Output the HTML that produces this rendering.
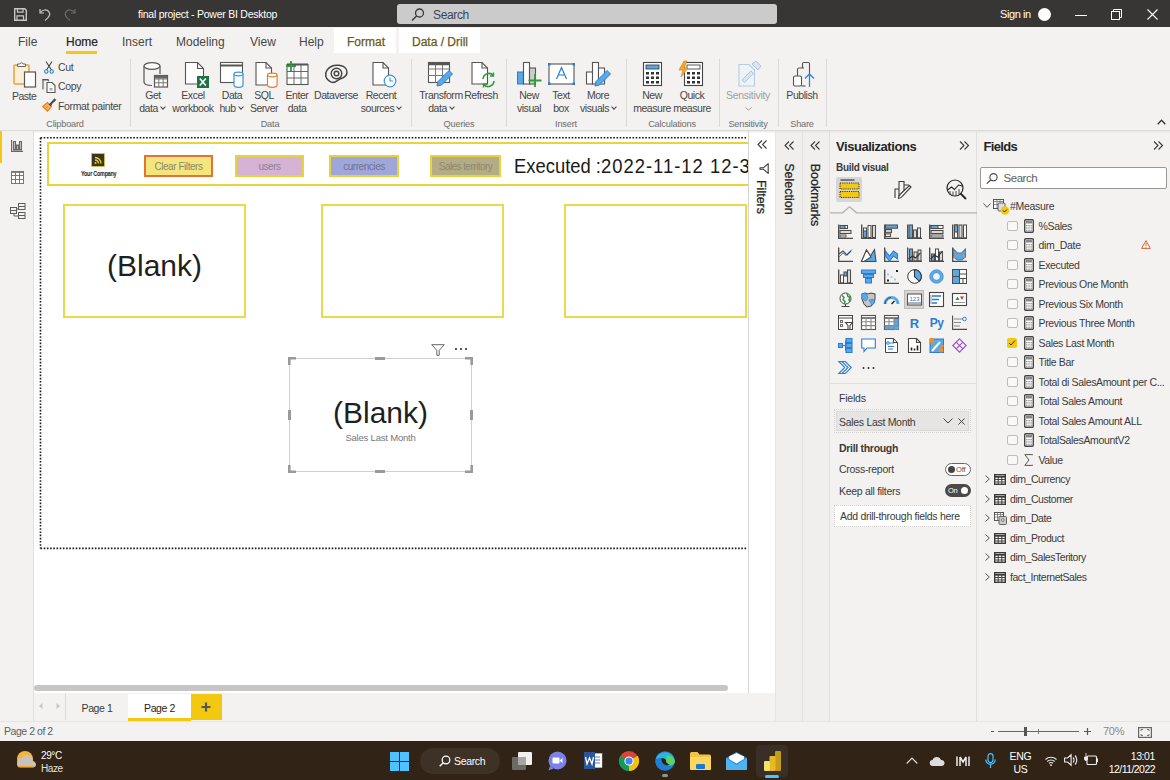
<!DOCTYPE html>
<html><head><meta charset="utf-8">
<style>
*{box-sizing:border-box;margin:0;padding:0}
html,body{width:1170px;height:780px;overflow:hidden;background:#f3f2f1;font-family:"Liberation Sans",sans-serif;color:#323130}
.a{position:absolute}
.t{position:absolute;white-space:nowrap;line-height:1}
.chev{display:inline-block;width:4px;height:4px;border-right:1.2px solid #444;border-bottom:1.2px solid #444;transform:rotate(45deg);margin:0 0 0 3px;position:relative;top:-3px}
svg{position:absolute;overflow:visible}
</style></head><body>
<!-- TITLE BAR -->
<div class="a" style="left:0;top:0;width:1170px;height:27px;background:#383634"></div>
<svg style="left:14px;top:8px" width="13" height="13" viewBox="0 0 13 13"><path d="M0.7 0.7h10l1.6 1.6v10H0.7z" fill="none" stroke="#c8c6c4" stroke-width="1.4"/><path d="M3.5 0.7v3.5h5.5V0.7M3 12.3V7.8h6.5v4.5" fill="none" stroke="#c8c6c4" stroke-width="1.2"/></svg>
<svg style="left:39px;top:8px" width="12" height="13" viewBox="0 0 12 13"><path d="M1 1v4h4" fill="none" stroke="#c8c6c4" stroke-width="1.2"/><path d="M1.3 4.8C3 1.5 8 1 10 3.8c1.8 2.6.5 5.2-4 8.7" fill="none" stroke="#c8c6c4" stroke-width="1.2"/></svg>
<svg style="left:64px;top:8px" width="12" height="13" viewBox="0 0 12 13"><path d="M11 1v4H7" fill="none" stroke="#6d6b69" stroke-width="1.2"/><path d="M10.7 4.8C9 1.5 4 1 2 3.8c-1.8 2.6-.5 5.2 4 8.7" fill="none" stroke="#6d6b69" stroke-width="1.2"/></svg>
<div class="a" style="left:397px;top:4px;width:380px;height:20px;background:#cbcbcb;border-radius:3px"></div>
<svg style="left:411px;top:8px" width="14" height="13" viewBox="0 0 14 13"><circle cx="8.5" cy="5" r="4" fill="none" stroke="#3b3a39" stroke-width="1.3"/><path d="M5.6 7.9L1 12.5" stroke="#3b3a39" stroke-width="1.4"/></svg>
<div class="t" style="left:138px;top:9px;font-size:10.5px;letter-spacing:-0.25px;color:#fff">final project - Power BI Desktop</div>
<div class="t" style="left:433px;top:9px;font-size:12px;letter-spacing:-0.35px;color:#3c4359">Search</div>
<div class="t" style="left:1000px;top:9px;font-size:11px;letter-spacing:-0.4px;color:#fff">Sign in</div>
<div class="a" style="left:1038px;top:8px;width:13px;height:13px;border-radius:50%;background:#fff"></div>
<div class="a" style="left:1075px;top:15px;width:12px;height:1px;background:#fff"></div>
<svg style="left:1111px;top:9px" width="11" height="11" viewBox="0 0 11 11"><path d="M2.5 2.5V0.5h8v8h-2" fill="none" stroke="#fff" stroke-width="1"/><rect x="0.5" y="2.5" width="8" height="8" fill="none" stroke="#fff" stroke-width="1"/></svg>
<svg style="left:1147px;top:9px" width="11" height="11" viewBox="0 0 11 11"><path d="M0.5 0.5L10.5 10.5M10.5 0.5L0.5 10.5" stroke="#fff" stroke-width="1.1"/></svg>

<!-- TABS ROW -->
<div class="a" style="left:334px;top:28px;width:62px;height:25px;background:#fff"></div>
<div class="a" style="left:399px;top:28px;width:81px;height:25px;background:#fff"></div>
<div class="t" style="left:18px;top:36px;font-size:12px;color:#484644">File</div>
<div class="t" style="left:66px;top:36px;font-size:12px;color:#252423;-webkit-text-stroke:0.2px #252423">Home</div>
<div class="a" style="left:66px;top:51px;width:31px;height:3px;background:#f2c811"></div>
<div class="t" style="left:122px;top:36px;font-size:12px;color:#484644">Insert</div>
<div class="t" style="left:176px;top:36px;font-size:12px;color:#484644">Modeling</div>
<div class="t" style="left:250px;top:36px;font-size:12px;color:#484644">View</div>
<div class="t" style="left:299px;top:36px;font-size:12px;color:#484644">Help</div>
<div class="t" style="left:347px;top:36px;font-size:12px;color:#6b5a1a;-webkit-text-stroke:0.25px #6b5a1a">Format</div>
<div class="t" style="left:412px;top:36px;font-size:12px;color:#6b5a1a;-webkit-text-stroke:0.25px #6b5a1a">Data / Drill</div>

<!-- RIBBON -->
<svg style="left:13px;top:61px" width="24" height="27" viewBox="0 0 24 27"><rect x="1" y="4" width="15" height="19" rx="1" fill="#fcefd6" stroke="#e3a43c" stroke-width="1.5"/><path d="M4.5 5.5h8V3h-2.3a1.8 1.8 0 0 0-3.4 0H4.5z" fill="#fff" stroke="#666" stroke-width="1"/><rect x="11.5" y="11" width="11" height="15" fill="#fff" stroke="#555" stroke-width="1.2"/></svg>
<svg style="left:44px;top:61px" width="10" height="13" viewBox="0 0 10 13"><path d="M2 0.5L7.5 9M8 0.5L2.5 9" stroke="#444" stroke-width="1.1"/><circle cx="2.3" cy="10.5" r="1.7" fill="none" stroke="#2b88d8" stroke-width="1.1"/><circle cx="7.7" cy="10.5" r="1.7" fill="none" stroke="#2b88d8" stroke-width="1.1"/></svg>
<svg style="left:42px;top:79px" width="14" height="14" viewBox="0 0 14 14"><path d="M1 10.5V0.6h5.5" fill="none" stroke="#555" stroke-width="1.1"/><path d="M0.6 0.6h5l1.2 1.5" fill="none" stroke="#555" stroke-width="1.1"/><path d="M5 3.5h5l3 3v7H5z" fill="#fff" stroke="#555" stroke-width="1.1"/><rect x="7.5" y="9" width="3" height="2.5" fill="#aaa"/></svg>
<svg style="left:42px;top:98px" width="14" height="14" viewBox="0 0 14 14"><path d="M0.8 8.5L5.5 4.5 9.5 8.5 5.5 13.2z" fill="#f5b35c" stroke="#e07b28" stroke-width="1.1"/><path d="M3 11l3-3" stroke="#e07b28" stroke-width="0.8"/><path d="M7.5 6.5l1-1 1 1-1 1zM8.5 5.5l4-4.5 1 1-4.5 4" fill="#fff" stroke="#444" stroke-width="1.1"/></svg>
<div class="t" style="left:12px;top:91px;font-size:10.5px;letter-spacing:-0.5px;color:#484644">Paste</div>
<div class="t" style="left:58px;top:62px;font-size:10.5px;letter-spacing:-0.3px;color:#484644">Cut</div>
<div class="t" style="left:58px;top:81px;font-size:10.5px;letter-spacing:-0.3px;color:#484644">Copy</div>
<div class="t" style="left:58px;top:101px;font-size:10.5px;color:#484644;letter-spacing:-0.35px">Format painter</div>
<div class="t" style="left:5px;width:120px;text-align:center;top:120px;font-size:9.2px;color:#6e6c6a;letter-spacing:-0.2px">Clipboard</div>
<div class="a" style="left:130px;top:59px;width:1px;height:68px;background:#dcdad8"></div>
<svg style="left:143px;top:62px" width="25" height="26" viewBox="0 0 25 26">
<path d="M1 4v16c0 2 3 3.5 8 3.5" fill="none" stroke="#555" stroke-width="1.2"/><path d="M17 4v8" stroke="#555" stroke-width="1.2"/><ellipse cx="9" cy="4" rx="8" ry="3.3" fill="#fff" stroke="#555" stroke-width="1.2"/>
<rect x="11.5" y="13.5" width="13" height="11.5" fill="#fff" stroke="#555" stroke-width="1.2"/><path d="M11.5 17h13M11.5 20.8h13M15.8 13.5v11.5M20.2 13.5v11.5" stroke="#777" stroke-width="1"/><rect x="11.5" y="13.5" width="13" height="3" fill="#666"/></svg>
<svg style="left:184px;top:62px" width="26" height="26" viewBox="0 0 26 26"><path d="M1.5 0.5h12l6 6V22h-18z" fill="#fff" stroke="#555" stroke-width="1.1"/><path d="M13.5 0.5v6h6" fill="none" stroke="#555" stroke-width="1.1"/><rect x="13" y="14" width="12" height="12" fill="#1e7145"/><path d="M15.8 16.5l6 7M21.8 16.5l-6 7" stroke="#fff" stroke-width="1.6"/></svg>
<svg style="left:220px;top:62px" width="25" height="26" viewBox="0 0 25 26"><rect x="0.5" y="0.5" width="22" height="20" fill="#fff" stroke="#555" stroke-width="1.1"/><path d="M0.5 3.5h22" stroke="#555" stroke-width="2"/><path d="M14 12v11c0 1.5 2.3 2.3 4.5 2.3s4.5-.8 4.5-2.3V12" fill="#fff" stroke="#3a96dd" stroke-width="1.2"/><ellipse cx="18.5" cy="12" rx="4.5" ry="1.8" fill="#fff" stroke="#3a96dd" stroke-width="1.2"/></svg>
<svg style="left:255px;top:62px" width="24" height="26" viewBox="0 0 24 26"><path d="M1 0.5h10l5.5 5.5V23H1z" fill="#fff" stroke="#555" stroke-width="1.1"/><path d="M11 0.5v5.5h5.5" fill="none" stroke="#555" stroke-width="1.1"/><path d="M12.5 13v10c0 1.5 2.3 2.3 4.8 2.3s4.8-.8 4.8-2.3V13" fill="#fff" stroke="#e0812b" stroke-width="1.2"/><ellipse cx="17.3" cy="13" rx="4.8" ry="1.8" fill="#fff" stroke="#e0812b" stroke-width="1.2"/></svg>
<svg style="left:285px;top:61px" width="25" height="26" viewBox="0 0 25 26"><rect x="2" y="3.5" width="21" height="20" fill="#fff" stroke="#555" stroke-width="1.1"/><path d="M2 10.5h21M2 17h21M9 3.5v20M16 3.5v20" stroke="#666" stroke-width="1"/><path d="M2 3.5h21" stroke="#555" stroke-width="2"/><path d="M6 0v10M1 5h10" stroke="#2e9b3f" stroke-width="1.8"/></svg>
<svg style="left:324px;top:64px" width="24" height="19" viewBox="0 0 24 19"><path d="M5 16.8C1.5 14.5 0.6 10 3 6.2 5.5 2.2 10 0.8 15 1.2c5 .5 8 3.5 8 7 0 4-3.5 5.5-6.5 6.5-2.5 1-4.5 3.7-7.5 3.7-1.5 0-3-.6-4-1.6z" fill="none" stroke="#444" stroke-width="1.5"/><circle cx="12.5" cy="9.5" r="5.3" fill="none" stroke="#444" stroke-width="1.4"/><circle cx="12.5" cy="9.5" r="2.3" fill="none" stroke="#444" stroke-width="1.4"/></svg>
<svg style="left:372px;top:62px" width="25" height="26" viewBox="0 0 25 26"><path d="M1 0.5h10l5.5 5.5V23H1z" fill="#fff" stroke="#555" stroke-width="1.1"/><path d="M11 0.5v5.5h5.5" fill="none" stroke="#555" stroke-width="1.1"/><circle cx="18" cy="19" r="5.8" fill="#fff" stroke="#3a96dd" stroke-width="1.2"/><path d="M18 15.5V19h3" fill="none" stroke="#3a96dd" stroke-width="1.1"/></svg>
<div class="t" style="left:93px;width:120px;text-align:center;top:90px;font-size:10.5px;color:#484644;letter-spacing:-0.45px">Get</div>
<div class="t" style="left:92px;width:120px;text-align:center;top:103px;font-size:10.5px;color:#484644;letter-spacing:-0.45px">data<i class="chev"></i></div>
<div class="t" style="left:133px;width:120px;text-align:center;top:90px;font-size:10.5px;color:#484644;letter-spacing:-0.45px">Excel</div>
<div class="t" style="left:133px;width:120px;text-align:center;top:103px;font-size:10.5px;color:#484644;letter-spacing:-0.45px">workbook</div>
<div class="t" style="left:172px;width:120px;text-align:center;top:90px;font-size:10.5px;color:#484644;letter-spacing:-0.45px">Data</div>
<div class="t" style="left:171px;width:120px;text-align:center;top:103px;font-size:10.5px;color:#484644;letter-spacing:-0.45px">hub<i class="chev"></i></div>
<div class="t" style="left:204px;width:120px;text-align:center;top:90px;font-size:10.5px;color:#484644;letter-spacing:-0.45px">SQL</div>
<div class="t" style="left:204px;width:120px;text-align:center;top:103px;font-size:10.5px;color:#484644;letter-spacing:-0.45px">Server</div>
<div class="t" style="left:237px;width:120px;text-align:center;top:90px;font-size:10.5px;color:#484644;letter-spacing:-0.45px">Enter</div>
<div class="t" style="left:237px;width:120px;text-align:center;top:103px;font-size:10.5px;color:#484644;letter-spacing:-0.45px">data</div>
<div class="t" style="left:276px;width:120px;text-align:center;top:90px;font-size:10.5px;color:#484644;letter-spacing:-0.45px">Dataverse</div>
<div class="t" style="left:321px;width:120px;text-align:center;top:90px;font-size:10.5px;color:#484644;letter-spacing:-0.45px">Recent</div>
<div class="t" style="left:321px;width:120px;text-align:center;top:103px;font-size:10.5px;color:#484644;letter-spacing:-0.45px">sources<i class="chev"></i></div>
<div class="t" style="left:210px;width:120px;text-align:center;top:120px;font-size:9.2px;color:#6e6c6a;letter-spacing:-0.2px">Data</div>
<div class="a" style="left:411px;top:59px;width:1px;height:68px;background:#dcdad8"></div>
<svg style="left:428px;top:62px" width="26" height="26" viewBox="0 0 26 26"><rect x="0.5" y="0.5" width="21" height="20" fill="#fff" stroke="#555" stroke-width="1.1"/><path d="M0.5 7h21M0.5 13.5h21M7.5 0.5v20M14.5 0.5v20" stroke="#777" stroke-width="1"/><path d="M0.5 2h21" stroke="#555" stroke-width="2.5"/><path d="M9 24l1-4.5 11-11 3.5 3.5-11 11z" fill="#5aa9e6" stroke="#2b7cd3" stroke-width="1"/></svg>
<svg style="left:471px;top:62px" width="24" height="26" viewBox="0 0 24 26"><path d="M1 0.5h10l5.5 5.5V22H1z" fill="#fff" stroke="#555" stroke-width="1.1"/><path d="M11 0.5v5.5h5.5" fill="none" stroke="#555" stroke-width="1.1"/><path d="M12 17a6 6 0 0 1 10.5-3.5M23 19a6 6 0 0 1-10.5 3.5" fill="none" stroke="#2e9b3f" stroke-width="1.6"/><path d="M22.5 10.5v3.5h-3.5M12.5 25.5V22h3.5" fill="none" stroke="#2e9b3f" stroke-width="1.4"/></svg>
<div class="t" style="left:381px;width:120px;text-align:center;top:90px;font-size:10.5px;color:#484644;letter-spacing:-0.45px">Transform</div>
<div class="t" style="left:381px;width:120px;text-align:center;top:103px;font-size:10.5px;color:#484644;letter-spacing:-0.45px">data<i class="chev"></i></div>
<div class="t" style="left:421px;width:120px;text-align:center;top:90px;font-size:10.5px;color:#484644;letter-spacing:-0.45px">Refresh</div>
<div class="t" style="left:399px;width:120px;text-align:center;top:120px;font-size:9.2px;color:#6e6c6a;letter-spacing:-0.2px">Queries</div>
<div class="a" style="left:506px;top:59px;width:1px;height:68px;background:#dcdad8"></div>
<svg style="left:517px;top:62px" width="25" height="26" viewBox="0 0 25 26"><rect x="0.5" y="10" width="6" height="12" fill="#5aa9e6" stroke="#2b7cd3" stroke-width="1"/><rect x="6.5" y="0.5" width="6" height="21.5" fill="#fff" stroke="#555" stroke-width="1.1"/><rect x="12.5" y="6" width="6" height="16" fill="#ccc" stroke="#555" stroke-width="1.1"/><path d="M18 12v13M11.5 18.5h13" stroke="#2e9b3f" stroke-width="1.8"/></svg>
<svg style="left:548px;top:63px" width="27" height="22" viewBox="0 0 27 22"><rect x="1" y="1" width="25" height="20" fill="#fff" stroke="#555" stroke-width="1.1"/><rect x="0" y="0" width="2.5" height="2.5" fill="#2b7cd3"/><rect x="24.5" y="0" width="2.5" height="2.5" fill="#2b7cd3"/><rect x="0" y="19.5" width="2.5" height="2.5" fill="#2b7cd3"/><rect x="24.5" y="19.5" width="2.5" height="2.5" fill="#2b7cd3"/><path d="M8.5 16L13.5 4.5 18.5 16M10.3 12h6.4" fill="none" stroke="#2b7cd3" stroke-width="1.2"/></svg>
<svg style="left:586px;top:62px" width="26" height="26" viewBox="0 0 26 26"><rect x="0.5" y="10" width="6" height="12" fill="#fff" stroke="#555" stroke-width="1.1"/><rect x="6.5" y="0.5" width="6" height="21.5" fill="#fff" stroke="#555" stroke-width="1.1"/><rect x="12.5" y="6" width="6" height="16" fill="#fff" stroke="#555" stroke-width="1.1"/><path d="M9 24l1-4.5 11-11 3.5 3.5-11 11z" fill="#5aa9e6" stroke="#2b7cd3" stroke-width="1"/></svg>
<div class="t" style="left:469px;width:120px;text-align:center;top:90px;font-size:10.5px;color:#484644;letter-spacing:-0.45px">New</div>
<div class="t" style="left:469px;width:120px;text-align:center;top:103px;font-size:10.5px;color:#484644;letter-spacing:-0.45px">visual</div>
<div class="t" style="left:501px;width:120px;text-align:center;top:90px;font-size:10.5px;color:#484644;letter-spacing:-0.45px">Text</div>
<div class="t" style="left:501px;width:120px;text-align:center;top:103px;font-size:10.5px;color:#484644;letter-spacing:-0.45px">box</div>
<div class="t" style="left:538px;width:120px;text-align:center;top:90px;font-size:10.5px;color:#484644;letter-spacing:-0.45px">More</div>
<div class="t" style="left:538px;width:120px;text-align:center;top:103px;font-size:10.5px;color:#484644;letter-spacing:-0.45px">visuals<i class="chev"></i></div>
<div class="t" style="left:506px;width:120px;text-align:center;top:120px;font-size:9.2px;color:#6e6c6a;letter-spacing:-0.2px">Insert</div>
<div class="a" style="left:626px;top:59px;width:1px;height:68px;background:#dcdad8"></div>
<svg style="left:643px;top:62px" width="19" height="24" viewBox="0 0 19 24"><rect x="0.5" y="0.5" width="18" height="23" fill="#fff" stroke="#444" stroke-width="1.1"/><rect x="3" y="3" width="13" height="4" fill="#5aa9e6" stroke="#333" stroke-width="0.8"/><g fill="#333"><rect x="3" y="10" width="3" height="2.5"/><rect x="8" y="10" width="3" height="2.5"/><rect x="13" y="10" width="3" height="2.5"/><rect x="3" y="14.5" width="3" height="2.5"/><rect x="8" y="14.5" width="3" height="2.5"/><rect x="13" y="14.5" width="3" height="2.5"/><rect x="3" y="19" width="3" height="2.5"/><rect x="8" y="19" width="3" height="2.5"/><rect x="13" y="19" width="3" height="2.5"/></g></svg>
<svg style="left:678px;top:61px" width="25" height="25" viewBox="0 0 25 25"><rect x="6.5" y="1.5" width="18" height="23" fill="#fff" stroke="#444" stroke-width="1.1"/><rect x="9" y="4" width="13" height="4" fill="#fff" stroke="#333" stroke-width="0.8"/><g fill="#333"><rect x="9" y="11" width="3" height="2.5"/><rect x="14" y="11" width="3" height="2.5"/><rect x="19" y="11" width="3" height="2.5"/><rect x="9" y="15.5" width="3" height="2.5"/><rect x="14" y="15.5" width="3" height="2.5"/><rect x="19" y="15.5" width="3" height="2.5"/><rect x="9" y="20" width="3" height="2.5"/><rect x="14" y="20" width="3" height="2.5"/><rect x="19" y="20" width="3" height="2.5"/></g><path d="M6 0L1 9h4l-2 7 7-9H6l3-7z" fill="#f7a823" stroke="#d9822b" stroke-width="0.7"/></svg>
<div class="t" style="left:592px;width:120px;text-align:center;top:90px;font-size:10.5px;color:#484644;letter-spacing:-0.45px">New</div>
<div class="t" style="left:592px;width:120px;text-align:center;top:103px;font-size:10.5px;color:#484644;letter-spacing:-0.45px">measure</div>
<div class="t" style="left:632px;width:120px;text-align:center;top:90px;font-size:10.5px;color:#484644;letter-spacing:-0.45px">Quick</div>
<div class="t" style="left:632px;width:120px;text-align:center;top:103px;font-size:10.5px;color:#484644;letter-spacing:-0.45px">measure</div>
<div class="t" style="left:612px;width:120px;text-align:center;top:120px;font-size:9.2px;color:#6e6c6a;letter-spacing:-0.2px">Calculations</div>
<div class="a" style="left:719px;top:59px;width:1px;height:68px;background:#dcdad8"></div>
<svg style="left:738px;top:61px" width="25" height="26" viewBox="0 0 25 26"><path d="M1 3.5h10l5.5 5.5V25H1z" fill="#eef3f8" stroke="#b5cde0" stroke-width="1.1"/><path d="M4 19l9-9 2.5 2.5-9 9z" fill="#d8e6f2" stroke="#a8c4dc" stroke-width="1"/><path d="M14 3l4-3 5 5-3 4z" fill="#d8e6f2" stroke="#a8c4dc" stroke-width="1"/></svg>
<div class="t" style="left:688px;width:120px;text-align:center;top:90px;font-size:10.5px;color:#a19f9d;letter-spacing:-0.3px">Sensitivity</div>
<svg style="left:745px;top:107px" width="7" height="4" viewBox="0 0 7 4"><path d="M0.5 0.5L3.5 3.2L6.5 0.5" fill="none" stroke="#a19f9d" stroke-width="1"/></svg>
<div class="t" style="left:688px;width:120px;text-align:center;top:120px;font-size:9.2px;color:#6e6c6a;letter-spacing:-0.2px">Sensitivity</div>
<div class="a" style="left:778px;top:59px;width:1px;height:68px;background:#dcdad8"></div>
<svg style="left:793px;top:62px" width="23" height="25" viewBox="0 0 23 25"><rect x="0.5" y="14" width="8" height="10" rx="1.5" fill="#fff" stroke="#555" stroke-width="1.1"/><path d="M4.5 14V7.5a1.5 1.5 0 0 1 1.5-1.5h5" fill="none" stroke="#555" stroke-width="1.1"/><path d="M9.5 6V2a1.5 1.5 0 0 1 1.5-1.5h4a1.5 1.5 0 0 1 1.5 1.5v10" fill="none" stroke="#555" stroke-width="1.1"/><path d="M8.5 24h4" stroke="#555" stroke-width="1.1"/><path d="M16.5 25V12M12 16.5l4.5-4.5 4.5 4.5" fill="none" stroke="#2b88d8" stroke-width="1.3"/></svg>
<div class="t" style="left:742px;width:120px;text-align:center;top:90px;font-size:10.5px;color:#484644;letter-spacing:-0.45px">Publish</div>
<div class="t" style="left:742px;width:120px;text-align:center;top:120px;font-size:9.2px;color:#6e6c6a;letter-spacing:-0.2px">Share</div>
<div class="a" style="left:826px;top:59px;width:1px;height:68px;background:#dcdad8"></div>
<svg style="left:1157px;top:119px" width="9" height="6" viewBox="0 0 9 6"><path d="M0.7 5.3L4.5 1.3L8.3 5.3" fill="none" stroke="#333" stroke-width="1.3"/></svg>


<!-- LEFT NAV -->
<div class="a" style="left:0;top:131px;width:34px;height:590px;background:#f3f2f1;border-right:1px solid #e1dfdd"></div>
<div class="a" style="left:0;top:131px;width:2px;height:32px;background:#f2c811"></div>
<svg style="left:11px;top:140px" width="12" height="12" viewBox="0 0 12 12"><path d="M0.6 0v11.4H12" fill="none" stroke="#6a6866" stroke-width="1.2"/><rect x="2.5" y="1.5" width="2" height="8.5" fill="#bbb" stroke="#6a6866" stroke-width="1"/><rect x="5.5" y="5" width="2" height="5" fill="#bbb" stroke="#6a6866" stroke-width="1"/><rect x="8.5" y="1.5" width="2" height="8.5" fill="#bbb" stroke="#6a6866" stroke-width="1"/></svg>
<svg style="left:11px;top:171px" width="13" height="13" viewBox="0 0 13 13"><rect x="0.5" y="0.5" width="12" height="12" fill="#fff" stroke="#777" stroke-width="1"/><path d="M0.5 4.5h12M0.5 8.5h12M4.5 0.5v12M8.5 0.5v12" stroke="#777" stroke-width="1"/><path d="M0.5 1.2h12" stroke="#777" stroke-width="1.4"/></svg>
<svg style="left:10px;top:203px" width="16" height="16" viewBox="0 0 16 16"><rect x="0.5" y="4.5" width="6" height="6" fill="none" stroke="#605e5c" stroke-width="1"/><path d="M0.5 7.5h6" stroke="#605e5c"/><rect x="8.5" y="0.5" width="6.5" height="6" fill="none" stroke="#605e5c" stroke-width="1"/><path d="M8.5 3.5h6.5" stroke="#605e5c"/><rect x="8.5" y="9.5" width="6.5" height="6" fill="none" stroke="#605e5c" stroke-width="1"/><path d="M8.5 12.5h6.5" stroke="#605e5c"/><path d="M6.5 6h2M4 10.5v2.5h4.5" fill="none" stroke="#605e5c"/></svg>

<!-- CANVAS -->
<div class="a" style="left:34px;top:131px;width:714px;height:562px;background:#fff;overflow:hidden">
 <svg style="left:0;top:0" width="714" height="562"><g stroke="#1a1a1a" stroke-width="1.6" stroke-dasharray="1.6 1.6"><path d="M6.5 6.8H713"/><path d="M6.5 417.4H713"/><path d="M6.5 6.8V417.4"/></g></svg>
 <div class="a" style="left:13px;top:11px;width:720px;height:44px;border:2px solid #e9d53a"></div>
 <svg style="left:57px;top:22px" width="14" height="14" viewBox="0 0 14 14"><rect x="0.5" y="0.5" width="13" height="13" fill="#3b3620" stroke="#d8c84a" stroke-width="0.8"/><path d="M4 4.5a6 6 0 0 1 6 6M4 7a3.5 3.5 0 0 1 3.5 3.5" fill="none" stroke="#e6cf3a" stroke-width="1.3"/><circle cx="4.5" cy="10" r="1" fill="#e6cf3a"/></svg>
 <div class="t" style="left:46.5px;top:38.5px;font-size:7.5px;font-weight:bold;letter-spacing:-0.3px;color:#222;transform:scaleX(0.72);transform-origin:0 0">Your Company</div>
 <div class="a" style="left:110px;top:24px;width:69px;height:22px;border:2px solid #e27236;background:#f4e67c"></div>
 <div class="t" style="left:110px;width:69px;text-align:center;top:31px;font-size:10px;letter-spacing:-0.45px;color:#8b876c">Clear Filters</div>
 <div class="a" style="left:201px;top:24px;width:69px;height:22px;border:2px solid #e8d33c;background:#d6b2d5"></div>
 <div class="t" style="left:201px;width:69px;text-align:center;top:31px;font-size:10px;letter-spacing:-0.45px;color:#8d8294">users</div>
 <div class="a" style="left:295px;top:24px;width:70px;height:22px;border:2px solid #e8d33c;background:#9fa7da"></div>
 <div class="t" style="left:295px;width:70px;text-align:center;top:31px;font-size:10px;letter-spacing:-0.45px;color:#6f7392">currencies</div>
 <div class="a" style="left:396px;top:24px;width:71px;height:22px;border:2px solid #e8d33c;background:#b4ac85"></div>
 <div class="t" style="left:396px;width:71px;text-align:center;top:31px;font-size:10px;letter-spacing:-0.55px;color:#8e8970">Sales territory</div>
 <div class="t" style="left:480px;top:25px;font-size:20px;transform:scaleX(0.92);transform-origin:0 0;color:#1a1a1a">Executed :<span style="letter-spacing:1.1px">2022-11-12 12-37</span></div>

 <div class="a" style="left:29px;top:73px;width:183px;height:114px;border:2px solid #e9da4c"></div>
 <div class="t" style="left:29px;width:183px;text-align:center;top:120px;font-size:30px;color:#1f1f1f">(Blank)</div>
 <div class="a" style="left:287px;top:73px;width:183px;height:114px;border:2px solid #e9da4c"></div>
 <div class="a" style="left:530px;top:73px;width:183px;height:114px;border:2px solid #e9da4c"></div>

 <div class="a" style="left:255px;top:227px;width:183px;height:114px;border:1px solid #d2d0ce"></div>
 <div class="t" style="left:255px;width:183px;text-align:center;top:267px;font-size:30px;color:#1f1f1f">(Blank)</div>
 <div class="t" style="left:255px;width:183px;text-align:center;top:302px;font-size:9.5px;letter-spacing:-0.2px;color:#777">Sales Last Month</div>
 <svg style="left:254px;top:226px" width="185" height="116"><g fill="none" stroke="#9a9a9a" stroke-width="2.6"><path d="M1.3 8V1.3H8"/><path d="M177 1.3h6.7V8"/><path d="M1.3 108v6.7H8"/><path d="M177 114.7h6.7V108"/></g><g fill="#9a9a9a"><rect x="87" y="0" width="10" height="3"/><rect x="87" y="113" width="10" height="3"/><rect x="0" y="53" width="3" height="10"/><rect x="182" y="53" width="3" height="10"/></g></svg>
 <svg style="left:397px;top:213px" width="14" height="12" viewBox="0 0 14 12"><path d="M0.7 0.7h12.6L8.2 6.3v5H5.8v-5z" fill="none" stroke="#666" stroke-width="1"/></svg>
 <div class="a" style="left:421px;top:217px;width:2px;height:2px;background:#555;box-shadow:5px 0 #555,10px 0 #555"></div>

 <div class="a" style="left:0;top:554px;width:694px;height:6px;border-radius:3px;background:#c8c6c4"></div>
</div>
<div class="a" style="left:748px;top:131px;width:1px;height:562px;background:#d6d4d2"></div>

<!-- PAGE TABS -->
<div class="a" style="left:34px;top:693px;width:741px;height:28px;background:#f3f2f1"></div>
<div class="a" style="left:65px;top:694px;width:1px;height:26px;background:#dddbd9"></div>
<svg style="left:39px;top:703px" width="4" height="6" viewBox="0 0 4 6"><path d="M3.5 0L0 3l3.5 3z" fill="#c8c6c4"/></svg>
<svg style="left:56px;top:703px" width="4" height="6" viewBox="0 0 4 6"><path d="M0.5 0L4 3L0.5 6z" fill="#c8c6c4"/></svg>
<div class="t" style="left:66px;width:62px;text-align:center;top:703px;font-size:10.5px;letter-spacing:-0.4px;color:#3b3a39">Page 1</div>
<div class="a" style="left:128px;top:694px;width:63px;height:27px;background:#fff"></div>
<div class="a" style="left:128px;top:718px;width:63px;height:3px;background:#f2c811"></div>
<div class="t" style="left:128px;width:63px;text-align:center;top:703px;font-size:10.5px;letter-spacing:-0.4px;color:#252423">Page 2</div>
<div class="a" style="left:191px;top:694px;width:31px;height:26px;background:#f2c811"></div>
<svg style="left:201px;top:702px" width="10" height="10" viewBox="0 0 10 10"><path d="M5 0.5v9M0.5 5h9" stroke="#555" stroke-width="2.2"/></svg>

<!-- STATUS BAR -->
<div class="a" style="left:0;top:721px;width:1170px;height:20px;background:#f3f2f1;border-top:1px solid #e6e4e2"></div>
<div class="t" style="left:4px;top:726px;font-size:10.5px;letter-spacing:-0.45px;color:#605e5c">Page 2 of 2</div>
<div class="a" style="left:991px;top:731px;width:3px;height:1px;background:#555"></div>
<div class="a" style="left:998px;top:731px;width:81px;height:1px;background:#666"></div>
<div class="a" style="left:1024px;top:727px;width:3px;height:9px;background:#555"></div>
<div class="a" style="left:1038px;top:729px;width:1px;height:5px;background:#777"></div>
<svg style="left:1084px;top:728px" width="7" height="7" viewBox="0 0 7 7"><path d="M3.5 0v7M0 3.5h7" stroke="#555" stroke-width="1.2"/></svg>
<div class="t" style="left:1103px;top:726px;font-size:11px;letter-spacing:-0.3px;color:#8a8886">70%</div>
<svg style="left:1138px;top:727px" width="14" height="11" viewBox="0 0 14 11"><rect x="0.6" y="0.6" width="12.8" height="9.8" fill="none" stroke="#666" stroke-width="1.2"/><path d="M3 4V2.5h2M9 2.5h2V4M11 7v1.5H9M5 8.5H3V7" fill="none" stroke="#666" stroke-width="0.9"/></svg>

<!-- TASKBAR -->
<div class="a" style="left:0;top:741px;width:1170px;height:39px;background:#312316"></div>
<svg style="left:15px;top:749px" width="22" height="21" viewBox="0 0 22 21"><circle cx="10" cy="10" r="8" fill="#f4b53f"/><path d="M2 14c0-3 2.5-5 5-5 1 -2.5 3.5-3.5 6-3 3 .5 5 3 5 6 2 .5 3 2 3 3.5 0 2-1.5 3-3 3H5c-2 0-3-1.5-3-3.5z" fill="#c9c2b8"/><path d="M3 17.5h16" stroke="#f4a23f" stroke-width="1.2"/></svg>
<div class="t" style="left:41px;top:751px;font-size:10px;letter-spacing:-0.4px;color:#fff">29°C</div>
<div class="t" style="left:41px;top:764px;font-size:10px;letter-spacing:-0.4px;color:#e6e1dc">Haze</div>
<svg style="left:390px;top:752px" width="19" height="19" viewBox="0 0 19 19"><g fill="#4cc2ff"><rect x="0" y="0" width="9" height="9"/><rect x="10" y="0" width="9" height="9"/><rect x="0" y="10" width="9" height="9"/><rect x="10" y="10" width="9" height="9"/></g></svg>
<div class="a" style="left:420px;top:748px;width:80px;height:26px;border-radius:13px;background:#3e3226"></div>
<svg style="left:439px;top:755px" width="12" height="12" viewBox="0 0 12 12"><circle cx="7" cy="5" r="3.8" fill="none" stroke="#fff" stroke-width="1.3"/><path d="M4.3 7.7L0.7 11.3" stroke="#fff" stroke-width="1.4"/></svg>
<div class="t" style="left:454px;top:756px;font-size:10.5px;letter-spacing:-0.35px;color:#fff">Search</div>
<svg style="left:512px;top:752px" width="20" height="18" viewBox="0 0 20 18"><rect x="0" y="5" width="14" height="13" rx="1" fill="#6e6a66"/><rect x="6" y="0" width="14" height="13" rx="1" fill="#f0f0f0"/><rect x="6" y="5" width="8" height="8" fill="#a8a5a2"/></svg>
<svg style="left:548px;top:751px" width="19" height="20" viewBox="0 0 19 20"><circle cx="9.5" cy="9.5" r="9" fill="#7b83eb"/><path d="M2 15l-1.5 4.5 5-2z" fill="#7b83eb"/><rect x="4.5" y="6.5" width="7" height="6" rx="1" fill="#fff"/><path d="M11.5 9.5l3-2.5v5z" fill="#fff"/></svg>
<svg style="left:584px;top:752px" width="18" height="17" viewBox="0 0 18 17"><rect x="7" y="1.5" width="11" height="14" fill="#fff" stroke="#ccd" stroke-width="0.5"/><path d="M10 5h6M10 8h6M10 11h6" stroke="#5a7bd0" stroke-width="1"/><rect x="0" y="0" width="11" height="17" fill="#2b579a"/><path d="M1.5 5l1.5 7 2.5-6 2.5 6 1.5-7" fill="none" stroke="#fff" stroke-width="1.3"/></svg>
<svg style="left:619px;top:751px" width="20" height="20" viewBox="0 0 20 20"><circle cx="10" cy="10" r="10" fill="#db4437"/><path d="M10 10L1.3 5A10 10 0 0 0 10 20z" fill="#0f9d58"/><path d="M10 10L18.7 5A10 10 0 0 1 10 20z" fill="#f4c20d"/><path d="M10 10l8.7-5A10 10 0 0 1 19.5 6L14 10z" fill="#f4c20d"/><circle cx="10" cy="10" r="4.6" fill="#fff"/><circle cx="10" cy="10" r="3.6" fill="#4285f4"/></svg>
<svg style="left:655px;top:751px" width="20" height="20" viewBox="0 0 20 20"><circle cx="10" cy="10" r="9.8" fill="#1f7fd6"/><path d="M0.6 8.5A9.8 9.8 0 0 1 19.8 10c0 2.8-2.2 4.6-5 4.6-2.4 0-4-1.3-4-2.8 0-.8.4-1.3.4-2 0-1.6-2-3-4.4-3-2.2 0-4.6 .8-6.4 1.7z" fill="#2fb6d6"/><path d="M13.5 4.2c3.8 1.2 6.3 3.6 6.3 6 0 2.6-2.2 4.4-5 4.4-2.4 0-4-1.3-4-2.8 0-.8.4-1.3.4-2 0-1.6-.8-3.6 2.3-5.6z" fill="#57d46a"/><path d="M6.5 7.4c2.5-.3 4.5 1 4.5 2.6 0 1.6 1.5 3 4 3.6-2 1-5.3.7-7-1.2-1.2-1.3-1.8-3.3-1.5-5z" fill="#2a1e14"/></svg>
<div class="a" style="left:662px;top:774px;width:6px;height:3px;border-radius:2px;background:#9a938d"></div>
<svg style="left:690px;top:752px" width="21" height="18" viewBox="0 0 21 18"><path d="M0 1.5a1.5 1.5 0 0 1 1.5-1.5h6l2 2.5h10a1.5 1.5 0 0 1 1.5 1.5V16.5a1.5 1.5 0 0 1-1.5 1.5H1.5A1.5 1.5 0 0 1 0 16.5z" fill="#f5c344"/><path d="M0 5h21v11.5a1.5 1.5 0 0 1-1.5 1.5H1.5A1.5 1.5 0 0 1 0 16.5z" fill="#ffd75e"/><rect x="6" y="12" width="9" height="5" rx="1" fill="#1a7bd4"/></svg>
<svg style="left:726px;top:752px" width="21" height="18" viewBox="0 0 21 18"><path d="M0 6L10.5 0 21 6v11a1 1 0 0 1-1 1H1a1 1 0 0 1-1-1z" fill="#1f8fe0"/><path d="M0 6l10.5 7L21 6v11a1 1 0 0 1-1 1H1a1 1 0 0 1-1-1z" fill="#4fb4f0"/><path d="M3 4.5l7.5-3.5 7.5 3.5v2.5l-7.5 4.5L3 7z" fill="#fff"/></svg>
<div class="a" style="left:756px;top:745px;width:32px;height:32px;border-radius:4px;background:#3a2f26"></div>
<svg style="left:764px;top:751px" width="17" height="20" viewBox="0 0 17 20"><rect x="11" y="0" width="6" height="20" rx="1" fill="#c59c1a"/><rect x="5.5" y="5" width="6" height="15" rx="1" fill="#e8b923"/><rect x="0" y="10" width="6" height="10" rx="1" fill="#f6df6a"/></svg>
<div class="a" style="left:765px;top:775px;width:14px;height:3px;border-radius:2px;background:#4cc2ff"></div>
<svg style="left:906px;top:757px" width="12" height="7" viewBox="0 0 12 7"><path d="M0.7 6.5L6 1l5.3 5.5" fill="none" stroke="#ddd" stroke-width="1.1"/></svg>
<svg style="left:930px;top:758px" width="15" height="8" viewBox="0 0 15 8"><path d="M3 8a3 3 0 0 1-.5-6A4.5 4.5 0 0 1 11 2a3 3 0 0 1 1 6z" fill="#ddd"/></svg>
<svg style="left:956px;top:756px" width="14" height="10" viewBox="0 0 14 10"><path d="M1 0.5v9.5M13 0.5v9.5M4 1v9M10 1v9M4 1l3 5 3-5" fill="none" stroke="#eee" stroke-width="1.5"/></svg>
<svg style="left:985px;top:753px" width="11" height="15" viewBox="0 0 11 15"><rect x="3" y="0.6" width="5" height="9" rx="2.5" fill="none" stroke="#4cc2ff" stroke-width="1.2"/><path d="M0.8 6.5a4.7 4.7 0 0 0 9.4 0M5.5 11.2V15" fill="none" stroke="#4cc2ff" stroke-width="1.2"/></svg>
<div class="t" style="left:990px;width:61px;text-align:center;top:751px;font-size:10.5px;letter-spacing:-0.3px;color:#fff">ENG</div>
<div class="t" style="left:990px;width:61px;text-align:center;top:764px;font-size:10.5px;letter-spacing:-0.3px;color:#fff">US</div>
<svg style="left:1045px;top:756px" width="12" height="10" viewBox="0 0 12 10"><path d="M0.5 3.5a8 8 0 0 1 11 0M2.3 5.5a5.3 5.3 0 0 1 7.4 0M4 7.4a2.7 2.7 0 0 1 4 0" fill="none" stroke="#eee" stroke-width="1.1"/><circle cx="6" cy="9.2" r="0.9" fill="#eee"/></svg>
<svg style="left:1064px;top:754px" width="14" height="12" viewBox="0 0 14 12"><path d="M0.6 4h3l3.5-3.2v10.4L3.6 8h-3z" fill="none" stroke="#eee" stroke-width="1.1"/><path d="M9 3.5a3.5 3.5 0 0 1 0 5M11 1.5a6.5 6.5 0 0 1 0 9" fill="none" stroke="#eee" stroke-width="1.1"/></svg>
<svg style="left:1084px;top:753px" width="14" height="13" viewBox="0 0 14 13"><rect x="3" y="3" width="9.5" height="8.5" rx="1" fill="none" stroke="#eee" stroke-width="1.1"/><rect x="12.5" y="5.5" width="1.5" height="3.5" fill="#eee"/><path d="M2 0v4M0.5 4h3v2a1.5 1.5 0 0 1-3 0z" fill="#eee" stroke="#eee" stroke-width="0.8"/></svg>
<div class="t" style="left:1055px;width:100px;text-align:right;top:751px;font-size:10.5px;letter-spacing:-0.4px;color:#fff">13:01</div>
<div class="t" style="left:1055px;width:100px;text-align:right;top:764px;font-size:10.5px;letter-spacing:-0.55px;color:#fff">12/11/2022</div>

<!-- RIGHT PANES -->
<div class="a" style="left:749px;top:131px;width:26px;height:562px;background:#fff"></div>
<div class="a" style="left:775px;top:131px;width:27px;height:590px;background:#f0efee;border-left:1px solid #e6e4e2"></div>
<div class="a" style="left:802px;top:131px;width:27px;height:590px;background:#f0efee;border-left:1px solid #e1dfdd"></div>
<div class="a" style="left:829px;top:131px;width:148px;height:590px;background:#f3f2f1;border-left:1px solid #e1dfdd"></div>
<div class="a" style="left:976px;top:131px;width:194px;height:590px;background:#f3f2f1;border-left:1px solid #e1dfdd"></div>
<svg style="left:757px;top:140px" width="11" height="9" viewBox="0 0 11 9"><path d="M5 0.5L1 4.5L5 8.5M9.5 0.5L5.5 4.5L9.5 8.5" fill="none" stroke="#3b3a39" stroke-width="1.1"/></svg>
<svg style="left:758.5px;top:163px" width="10" height="11" viewBox="0 0 10 11"><path d="M9.2 0.6V10.4L4.3 6.2H1V4.8H4.3Z" fill="none" stroke="#3b3a39" stroke-width="1.1" stroke-linejoin="round"/></svg>
<div class="t" style="left:760.5px;top:197px;font-size:12.5px;color:#252423;-webkit-text-stroke:0.25px #252423;transform:translate(-50%,-50%) rotate(90deg);transform-origin:center">Filters</div>
<svg style="left:784px;top:141px" width="11" height="9" viewBox="0 0 11 9"><path d="M5 0.5L1 4.5L5 8.5M9.5 0.5L5.5 4.5L9.5 8.5" fill="none" stroke="#3b3a39" stroke-width="1.1"/></svg>
<div class="t" style="left:789px;top:189px;font-size:12.5px;color:#252423;-webkit-text-stroke:0.25px #252423;transform:translate(-50%,-50%) rotate(90deg)">Selection</div>
<svg style="left:810px;top:141px" width="11" height="9" viewBox="0 0 11 9"><path d="M5 0.5L1 4.5L5 8.5M9.5 0.5L5.5 4.5L9.5 8.5" fill="none" stroke="#3b3a39" stroke-width="1.1"/></svg>
<div class="t" style="left:815px;top:195px;font-size:12.5px;color:#252423;-webkit-text-stroke:0.25px #252423;transform:translate(-50%,-50%) rotate(90deg)">Bookmarks</div>
<div class="t" style="left:836px;top:140px;font-size:13px;font-weight:bold;letter-spacing:-0.45px;color:#252423">Visualizations</div>
<svg style="left:959px;top:141px" width="11" height="9" viewBox="0 0 11 9"><path d="M1 0.5L5 4.5L1 8.5M5.5 0.5L9.5 4.5L5.5 8.5" fill="none" stroke="#3b3a39" stroke-width="1.1"/></svg>
<div class="t" style="left:836px;top:163px;font-size:10px;font-weight:bold;letter-spacing:-0.3px;color:#3b3a39">Build visual</div>
<div class="a" style="left:836px;top:177px;width:26px;height:25px;border-radius:2px;background:#d8d6d4"></div>
<svg style="left:839px;top:179px" width="21" height="20" viewBox="0 0 21 20"><path d="M1.5 1h14" stroke="#3b3a39" stroke-width="1.2"/><rect x="1" y="4" width="19" height="6" fill="#f2c811" stroke="#222" stroke-width="0.9" stroke-dasharray="1.2 1"/><rect x="1" y="12.5" width="19" height="6" fill="#f2c811" stroke="#222" stroke-width="0.9" stroke-dasharray="1.2 1"/></svg>
<svg style="left:894px;top:180px" width="19" height="20" viewBox="0 0 19 20"><path d="M1 18V9h4M5 16V1.5h5V12M10 5h5" fill="none" stroke="#3b3a39" stroke-width="1.1"/><path d="M4.5 18.5c2 0 3-1 4-2.5l8.5-9-1.5-1.5-9 8.5c-1 1-2 2-2 4.5z" fill="#fff" stroke="#3b3a39" stroke-width="1.1"/></svg>
<svg style="left:946px;top:179px" width="21" height="21" viewBox="0 0 21 21"><circle cx="9" cy="9" r="8" fill="none" stroke="#252423" stroke-width="1.2"/><path d="M1.5 11l4-3 3 2.5 4-4.5 3.5 1" fill="none" stroke="#252423" stroke-width="1.1"/><path d="M4 12v4M7 12.5v4.5M10 12v5M13 10v5" stroke="#555" stroke-width="1.1"/><path d="M14.5 14.5l5.5 5.5" stroke="#252423" stroke-width="1.8"/></svg>
<svg style="left:830px;top:206px" width="147" height="8" viewBox="0 0 147 8"><path d="M0 6.8H12.5L19.5 0.8 26.5 6.8H147" fill="none" stroke="#b3b1af" stroke-width="1.3"/></svg>
<div class="a" style="left:904px;top:290px;width:20px;height:19px;background:#d8d6d4;border:1px solid #bdbbb9"></div>
<svg style="left:838.4px;top:224.0px" width="15" height="15" viewBox="0 0 15 15"><path d="M0.7 0.5V14.3H15" fill="none" stroke="#4e4c4a" stroke-width="1.35"/><rect x="2" y="1.5" width="5" height="3" fill="#5aa9e6" stroke="#4e4c4a" stroke-width="1.05"/><rect x="7" y="1.5" width="2.5" height="3" fill="#fff" stroke="#4e4c4a" stroke-width="1.05"/><rect x="2" y="6.5" width="11" height="3" fill="#e0e0e0" stroke="#4e4c4a" stroke-width="1.05"/><rect x="2" y="11" width="6" height="2" fill="#fff" stroke="#4e4c4a" stroke-width="0.95"/></svg>
<svg style="left:861.1px;top:224.0px" width="15" height="15" viewBox="0 0 15 15"><path d="M0.7 0.5V14.3H15" fill="none" stroke="#4e4c4a" stroke-width="1.35"/><rect x="2.5" y="4" width="3" height="9.5" fill="#fff" stroke="#4e4c4a" stroke-width="1.05"/><rect x="2.5" y="7" width="3" height="6.5" fill="#5aa9e6" stroke="#4e4c4a" stroke-width="1.05"/><rect x="7" y="1.5" width="3" height="12" fill="#fff" stroke="#4e4c4a" stroke-width="1.05"/><rect x="11.5" y="1.5" width="3" height="12" fill="#ddd" stroke="#4e4c4a" stroke-width="1.05"/></svg>
<svg style="left:883.8px;top:224.0px" width="15" height="15" viewBox="0 0 15 15"><path d="M0.7 0.5V14.3H15" fill="none" stroke="#4e4c4a" stroke-width="1.35"/><rect x="1.5" y="1" width="12" height="3.2" fill="#5aa9e6" stroke="#4e4c4a" stroke-width="1.05"/><rect x="1.5" y="5.5" width="6" height="3.2" fill="#ccc" stroke="#4e4c4a" stroke-width="1.05"/><rect x="1.5" y="10" width="5" height="2.5" fill="#fff" stroke="#4e4c4a" stroke-width="1.05"/></svg>
<svg style="left:906.5px;top:224.0px" width="15" height="15" viewBox="0 0 15 15"><path d="M0.7 0.5V14.3H15" fill="none" stroke="#4e4c4a" stroke-width="1.35"/><rect x="2" y="1" width="3.5" height="12.8" fill="#5aa9e6" stroke="#4e4c4a" stroke-width="1.05"/><rect x="6.5" y="6" width="3" height="7.8" fill="#ddd" stroke="#4e4c4a" stroke-width="1.05"/><rect x="10.5" y="4" width="3" height="9.8" fill="#eee" stroke="#4e4c4a" stroke-width="1.05"/></svg>
<svg style="left:929.2px;top:224.0px" width="15" height="15" viewBox="0 0 15 15"><path d="M0.7 0.5V14.3H15" fill="none" stroke="#4e4c4a" stroke-width="1.35"/><rect x="2" y="1.5" width="12" height="3" fill="#fff" stroke="#4e4c4a" stroke-width="1.05"/><rect x="2" y="1.5" width="7" height="3" fill="#5aa9e6" stroke="#4e4c4a" stroke-width="1.05"/><rect x="2" y="6.5" width="12" height="3" fill="#ddd" stroke="#4e4c4a" stroke-width="1.05"/><rect x="2" y="11" width="12" height="2" fill="#fff" stroke="#4e4c4a" stroke-width="0.95"/></svg>
<svg style="left:951.9px;top:224.0px" width="15" height="15" viewBox="0 0 15 15"><path d="M0.7 0.5V14.3H15" fill="none" stroke="#4e4c4a" stroke-width="1.35"/><rect x="2.5" y="1" width="3" height="12.8" fill="#fff" stroke="#4e4c4a" stroke-width="1.05"/><rect x="2.5" y="1" width="3" height="7" fill="#5aa9e6" stroke="#4e4c4a" stroke-width="1.05"/><rect x="7" y="1" width="3" height="12.8" fill="#ddd" stroke="#4e4c4a" stroke-width="1.05"/><rect x="11.5" y="1" width="3" height="12.8" fill="#fff" stroke="#4e4c4a" stroke-width="1.05"/></svg>
<svg style="left:838.4px;top:246.7px" width="15" height="15" viewBox="0 0 15 15"><path d="M0.7 0.5V14.3H15" fill="none" stroke="#4e4c4a" stroke-width="1.35"/><path d="M1 10l4-4 3 2.5 6-6" fill="none" stroke="#2b7cd3" stroke-width="1"/><path d="M1 7l4-3 4 4 4-4" fill="none" stroke="#4e4c4a" stroke-width="1.1"/></svg>
<svg style="left:861.1px;top:246.7px" width="15" height="15" viewBox="0 0 15 15"><path d="M0.5 14.5L5.5 3l4 6 4-6.5 1.5 12z" fill="#5aa9e6" stroke="#4e4c4a" stroke-width="1.1"/><path d="M0.5 14.5L5.5 3 10 10 3 14.5z" fill="#fff" stroke="#4e4c4a" stroke-width="1.05"/><path d="M0 14.5h15" stroke="#4e4c4a" stroke-width="1.1"/></svg>
<svg style="left:883.8px;top:246.7px" width="15" height="15" viewBox="0 0 15 15"><path d="M0.7 0.5V14.3H15" fill="none" stroke="#4e4c4a" stroke-width="1.35"/><path d="M1.5 4l4 5 4-5 4 3v5l-4-3-4 5-4-5z" fill="#5aa9e6" stroke="#2b7cd3" stroke-width="1.1"/></svg>
<svg style="left:906.5px;top:246.7px" width="15" height="15" viewBox="0 0 15 15"><path d="M0.7 0.5V14.3H15" fill="none" stroke="#4e4c4a" stroke-width="1.35"/><rect x="2.5" y="2" width="3" height="11.8" fill="#5aa9e6" stroke="#4e4c4a" stroke-width="1.05"/><rect x="7" y="5" width="3" height="8.8" fill="#eee" stroke="#4e4c4a" stroke-width="1.05"/><rect x="11" y="3" width="3" height="10.8" fill="#ddd" stroke="#4e4c4a" stroke-width="1.05"/><path d="M1.5 12l4-3 3 2 5-5" fill="none" stroke="#333" stroke-width="1.1"/></svg>
<svg style="left:929.2px;top:246.7px" width="15" height="15" viewBox="0 0 15 15"><path d="M0.7 0.5V14.3H15" fill="none" stroke="#4e4c4a" stroke-width="1.35"/><rect x="2.5" y="7" width="3" height="6.8" fill="#5aa9e6" stroke="#4e4c4a" stroke-width="1.05"/><rect x="6.5" y="2" width="3" height="11.8" fill="#fff" stroke="#4e4c4a" stroke-width="1.05"/><rect x="10.5" y="5" width="3" height="8.8" fill="#ddd" stroke="#4e4c4a" stroke-width="1.05"/><path d="M1.5 12l4-4 3 2 5-6" fill="none" stroke="#333" stroke-width="1.1"/></svg>
<svg style="left:951.9px;top:246.7px" width="15" height="15" viewBox="0 0 15 15"><path d="M0.7 0.5V14.3H15" fill="none" stroke="#4e4c4a" stroke-width="1.35"/><path d="M1.5 2l4 4h4l4-4v8l-4 3h-4l-4-3z" fill="#5aa9e6" stroke="#2b7cd3" stroke-width="1.05"/><path d="M1.5 4.5l4 3h4l4-3" fill="none" stroke="#999" stroke-width="1.05"/><circle cx="3" cy="10" r="1" fill="#e8912b"/><circle cx="12" cy="10" r="1" fill="#e8912b"/></svg>
<svg style="left:838.4px;top:269.4px" width="15" height="15" viewBox="0 0 15 15"><path d="M0.7 0.5V14.3H15" fill="none" stroke="#4e4c4a" stroke-width="1.35"/><rect x="2.5" y="6" width="3" height="7.8" fill="#fff" stroke="#4e4c4a" stroke-width="1.05"/><rect x="6" y="3" width="3" height="4" fill="#5aa9e6" stroke="#4e4c4a" stroke-width="1.05"/><rect x="9.5" y="1" width="3" height="12.8" fill="#ddd" stroke="#4e4c4a" stroke-width="1.05"/></svg>
<svg style="left:861.1px;top:269.4px" width="15" height="15" viewBox="0 0 15 15"><path d="M0.5 1h14v3.5h-14zM2.5 5.5h10v3h-10zM4.5 9.5h6v4.5h-6z" fill="#5aa9e6" stroke="#2b7cd3" stroke-width="1.05"/></svg>
<svg style="left:883.8px;top:269.4px" width="15" height="15" viewBox="0 0 15 15"><path d="M0.7 0.5V14.3H15" fill="none" stroke="#4e4c4a" stroke-width="1.35"/><rect x="3" y="4.5" width="2" height="2" fill="#a8c8e8"/><rect x="6.5" y="7" width="2" height="2" fill="#a8c8e8"/><rect x="10" y="9.5" width="2" height="2" fill="#a8c8e8"/><rect x="12" y="1" width="2" height="2" fill="#222"/><rect x="3" y="10.5" width="2" height="2" fill="#222"/></svg>
<svg style="left:906.5px;top:269.4px" width="15" height="15" viewBox="0 0 15 15"><circle cx="7.5" cy="7.5" r="6.8" fill="#fff" stroke="#333" stroke-width="1"/><path d="M7.5 0.7A6.8 6.8 0 0 1 12.3 12.3L7.5 7.5z" fill="#5aa9e6" stroke="#333" stroke-width="1.05"/></svg>
<svg style="left:929.2px;top:269.4px" width="15" height="15" viewBox="0 0 15 15"><circle cx="7.5" cy="7.5" r="5.3" fill="none" stroke="#5aa9e6" stroke-width="3"/><circle cx="7.5" cy="7.5" r="6.8" fill="none" stroke="#2b7cd3" stroke-width="0.6"/><circle cx="7.5" cy="7.5" r="3.8" fill="none" stroke="#2b7cd3" stroke-width="0.6"/></svg>
<svg style="left:951.9px;top:269.4px" width="15" height="15" viewBox="0 0 15 15"><rect x="0.5" y="0.5" width="14" height="14" fill="#fff" stroke="#4e4c4a" stroke-width="1"/><rect x="1" y="1" width="6.5" height="13" fill="#5aa9e6"/><path d="M1 7.5h6.5M7.5 1v13M7.5 5h7M7.5 9.5h7M11 9.5v5" stroke="#4e4c4a" stroke-width="1.05"/></svg>
<svg style="left:838.4px;top:292.1px" width="15" height="15" viewBox="0 0 15 15"><circle cx="7.5" cy="6.5" r="5.5" fill="#fff" stroke="#444" stroke-width="1"/><path d="M4 3.5l2 2-1 2 2 2-1 2.5M9 2l1 2.5 2 .5-1 3 1 2" fill="none" stroke="#2e9b3f" stroke-width="1.5"/><path d="M7.5 12v2M3.5 14.5h8" stroke="#444" stroke-width="1"/></svg>
<svg style="left:861.1px;top:292.1px" width="15" height="15" viewBox="0 0 15 15"><path d="M1 2l3-1 3 1 3-1 4 1v5l-1 4-3 3-4 1-3-3-2-5z" fill="#c8c6c4" stroke="#4e4c4a" stroke-width="1.05"/><path d="M1 2l3-1 2 2 1 3-2 3-4-2zM8 8l4-1 2 3-3 3z" fill="#5aa9e6" stroke="#2b7cd3" stroke-width="0.6"/></svg>
<svg style="left:883.8px;top:292.1px" width="15" height="15" viewBox="0 0 15 15"><path d="M1 12a6.5 6.5 0 0 1 13 0" fill="none" stroke="#5aa9e6" stroke-width="3"/><path d="M1 12a6.5 6.5 0 0 1 6-6.5" fill="none" stroke="#444" stroke-width="1"/><path d="M7.5 12l3-3" stroke="#222" stroke-width="1.5"/></svg>
<svg style="left:906.5px;top:292.1px" width="15" height="15" viewBox="0 0 15 15"><rect x="0.5" y="2" width="14" height="11" fill="#fff" stroke="#555" stroke-width="1.1"/><path d="M1 11h13" stroke="#999" stroke-width="1.5"/><text x="7.5" y="9" font-size="6" text-anchor="middle" fill="#2b7cd3" font-family="Liberation Sans">123</text></svg>
<svg style="left:929.2px;top:292.1px" width="15" height="15" viewBox="0 0 15 15"><rect x="0.5" y="0.5" width="14" height="14" fill="#fff" stroke="#444" stroke-width="1.1"/><path d="M3 4h9M3 7.5h7M3 11h5" stroke="#2b7cd3" stroke-width="1.5"/><path d="M2 3v9" stroke="#999" stroke-width="1.05"/></svg>
<svg style="left:951.9px;top:292.1px" width="15" height="15" viewBox="0 0 15 15"><rect x="0.5" y="1.5" width="14" height="12" fill="#fff" stroke="#444" stroke-width="1.1"/><path d="M3.5 8l2-3.5 2 3.5z" fill="#2e9b3f"/><path d="M8 4.5h4l-2 3.5z" fill="#d13438"/><path d="M2 10.5h11" stroke="#999" stroke-width="1"/></svg>
<svg style="left:838.4px;top:314.8px" width="15" height="15" viewBox="0 0 15 15"><rect x="0.5" y="0.5" width="14" height="14" fill="#fff" stroke="#444" stroke-width="1"/><path d="M0.5 3h14" stroke="#444" stroke-width="1"/><rect x="2.5" y="5.5" width="2" height="2" fill="none" stroke="#666" stroke-width="0.95"/><rect x="2.5" y="9.5" width="2" height="2" fill="none" stroke="#666" stroke-width="0.95"/><path d="M7.5 7.5h7l-2.5 3v4h-2v-4z" fill="#fff" stroke="#444" stroke-width="1.1"/></svg>
<svg style="left:861.1px;top:314.8px" width="15" height="15" viewBox="0 0 15 15"><rect x="0.5" y="0.5" width="14" height="14" fill="#fff" stroke="#555" stroke-width="1.1"/><path d="M0.5 3h14" stroke="#555" stroke-width="1.5"/><path d="M0.5 6.8h14M0.5 10.6h14M5 2v12.5M10 2v12.5" stroke="#888" stroke-width="1.05"/></svg>
<svg style="left:883.8px;top:314.8px" width="15" height="15" viewBox="0 0 15 15"><rect x="0.5" y="0.5" width="14" height="14" fill="#fff" stroke="#555" stroke-width="1.1"/><rect x="10" y="3" width="4.5" height="11.5" fill="#5aa9e6"/><rect x="1" y="10.6" width="13.5" height="3.9" fill="#5aa9e6"/><path d="M0.5 3h14" stroke="#555" stroke-width="1.5"/><path d="M0.5 6.8h14M0.5 10.6h14M5 2v12.5M10 2v12.5" stroke="#888" stroke-width="1.05"/></svg>
<svg style="left:906.5px;top:314.8px" width="15" height="15" viewBox="0 0 15 15"><text x="7.5" y="13" font-size="13" font-weight="bold" text-anchor="middle" fill="#2b7cd3" font-family="Liberation Sans">R</text></svg>
<svg style="left:929.2px;top:314.8px" width="15" height="15" viewBox="0 0 15 15"><text x="7.5" y="12" font-size="12" font-weight="bold" text-anchor="middle" fill="#2b7cd3" font-family="Liberation Sans" letter-spacing="-0.5">Py</text></svg>
<svg style="left:951.9px;top:314.8px" width="15" height="15" viewBox="0 0 15 15"><path d="M0.6 0.5V14.4H15" fill="none" stroke="#4e4c4a" stroke-width="1.1"/><path d="M2 4h9M2 7.5h7M2 11h6" stroke="#8a8886" stroke-width="1"/><circle cx="12.5" cy="4" r="1.8" fill="#fff" stroke="#2b7cd3" stroke-width="1"/></svg>
<svg style="left:838.4px;top:337.5px" width="15" height="15" viewBox="0 0 15 15"><rect x="0.5" y="5.5" width="4" height="4" fill="#5aa9e6" stroke="#2b7cd3" stroke-width="1.05"/><path d="M4.5 7.5h3M7.5 2.5v10" stroke="#2b7cd3" stroke-width="1"/><rect x="8" y="0.5" width="6" height="4" fill="#5aa9e6" stroke="#2b7cd3" stroke-width="1.05"/><rect x="8" y="5.5" width="6" height="4" fill="#5aa9e6" stroke="#2b7cd3" stroke-width="1.05"/><rect x="8" y="10.5" width="6" height="4" fill="#5aa9e6" stroke="#2b7cd3" stroke-width="1.05"/></svg>
<svg style="left:861.1px;top:337.5px" width="15" height="15" viewBox="0 0 15 15"><path d="M0.7 1h13.6v9H6l-3 3.5V10H0.7z" fill="#fff" stroke="#2b7cd3" stroke-width="1.1"/></svg>
<svg style="left:883.8px;top:337.5px" width="15" height="15" viewBox="0 0 15 15"><path d="M1.5 0.5h8l4 4v10h-12z" fill="#fff" stroke="#444" stroke-width="1"/><path d="M9.5 0.5v4h4" fill="none" stroke="#444" stroke-width="1.1"/><circle cx="4" cy="5" r="1.3" fill="none" stroke="#2b7cd3" stroke-width="1.05"/><path d="M6 5h4M4 8.5h6M4 11h5" stroke="#2b7cd3" stroke-width="1"/></svg>
<svg style="left:906.5px;top:337.5px" width="15" height="15" viewBox="0 0 15 15"><path d="M1.5 0.5h8l4 4v10h-12z" fill="#fff" stroke="#444" stroke-width="1.1"/><path d="M9.5 0.5v4h4" fill="none" stroke="#444" stroke-width="1.1"/><path d="M4.5 12.5v-3M7.5 12.5v-2M10.5 12.5v-5" stroke="#222" stroke-width="1.6"/></svg>
<svg style="left:929.2px;top:337.5px" width="15" height="15" viewBox="0 0 15 15"><rect x="1" y="1" width="13.5" height="13.5" fill="#5aa9e6" stroke="#2b7cd3" stroke-width="1"/><path d="M3 13l8-9" stroke="#fff" stroke-width="2"/><path d="M1 0h4v4l-2 3-2-3z" fill="#e8912b"/><circle cx="12" cy="12" r="2.5" fill="#e8912b"/><circle cx="13.5" cy="8" r="1.3" fill="#e8912b"/></svg>
<svg style="left:951.9px;top:337.5px" width="15" height="15" viewBox="0 0 15 15"><path d="M7.5 0.8L14.2 7.5 7.5 14.2 0.8 7.5z" fill="none" stroke="#9b4fc4" stroke-width="1.1"/><path d="M4.2 4.2l6.6 6.6M10.8 4.2L4.2 10.8" stroke="#9b4fc4" stroke-width="1.1"/></svg>
<svg style="left:838.4px;top:360.2px" width="15" height="15" viewBox="0 0 15 15"><path d="M0.8 1.5h6.5l6 6-6 6H0.8l6-6z" fill="#fff" stroke="#2b7cd3" stroke-width="1.1"/><path d="M4 1.5l6 6-6 6" fill="none" stroke="#2b7cd3" stroke-width="1.1"/></svg>
<svg style="left:861.1px;top:360.2px" width="15" height="15" viewBox="0 0 15 15"><circle cx="2.5" cy="8" r="1" fill="#333"/><circle cx="7.5" cy="8" r="1" fill="#333"/><circle cx="12.5" cy="8" r="1" fill="#333"/></svg>
<div class="a" style="left:830px;top:383px;width:146px;height:1px;background:#e1dfdd"></div>
<div class="t" style="left:839px;top:393px;font-size:10.5px;letter-spacing:-0.2px;color:#3b3a39">Fields</div>
<div class="a" style="left:834px;top:409px;width:137px;height:24px;border:1px dotted #d6d4d2"></div>
<div class="a" style="left:836px;top:411px;width:133px;height:20px;background:#e6e5e4;border:1px solid #dcdad8"></div>
<div class="t" style="left:839px;top:417px;font-size:10.5px;letter-spacing:-0.3px;color:#3b3a39">Sales Last Month</div>
<svg style="left:943px;top:418px" width="10" height="6" viewBox="0 0 10 6"><path d="M0.5 0.5L5 5 9.5 0.5" fill="none" stroke="#444" stroke-width="1"/></svg>
<svg style="left:958px;top:418px" width="7" height="7" viewBox="0 0 7 7"><path d="M0.5 0.5l6 6M6.5 0.5l-6 6" stroke="#444" stroke-width="1"/></svg>
<div class="t" style="left:839px;top:443px;font-size:10.5px;font-weight:bold;letter-spacing:-0.3px;color:#3b3a39">Drill through</div>
<div class="t" style="left:839px;top:464px;font-size:10.5px;letter-spacing:-0.3px;color:#3b3a39">Cross-report</div>
<div class="a" style="left:945px;top:463px;width:26px;height:13px;border-radius:7px;background:#fff;border:1px solid #666"></div>
<div class="a" style="left:948px;top:466px;width:7px;height:7px;border-radius:50%;background:#444"></div>
<div class="t" style="left:956px;top:466px;font-size:7.5px;letter-spacing:-0.2px;color:#555">Off</div>
<div class="t" style="left:839px;top:486px;font-size:10.5px;letter-spacing:-0.3px;color:#3b3a39">Keep all filters</div>
<div class="a" style="left:945px;top:484px;width:26px;height:13px;border-radius:7px;background:#4a4948"></div>
<div class="t" style="left:948px;top:487px;font-size:7.5px;letter-spacing:-0.3px;color:#fff">On</div>
<div class="a" style="left:961px;top:487px;width:7px;height:7px;border-radius:50%;background:#fff"></div>
<div class="a" style="left:834px;top:505px;width:137px;height:22px;background:#fff;border:1px dotted #d0cecc"></div>
<div class="t" style="left:840px;top:511px;font-size:10.5px;letter-spacing:-0.3px;color:#3b3a39">Add drill-through fields here</div>
<div class="t" style="left:983.5px;top:140px;font-size:13px;font-weight:bold;letter-spacing:-0.65px;color:#252423">Fields</div>
<svg style="left:1153px;top:141px" width="11" height="9" viewBox="0 0 11 9"><path d="M1 0.5L5 4.5L1 8.5M5.5 0.5L9.5 4.5L5.5 8.5" fill="none" stroke="#3b3a39" stroke-width="1.1"/></svg>
<div class="a" style="left:980px;top:167px;width:187px;height:22px;background:#fff;border:1px solid #9a9896;border-radius:2px"></div>
<svg style="left:986px;top:173px" width="12" height="11" viewBox="0 0 12 11"><circle cx="7.5" cy="4.2" r="3.6" fill="none" stroke="#444" stroke-width="1.1"/><path d="M4.9 6.8L0.8 10.6" stroke="#444" stroke-width="1.2"/></svg>
<div class="t" style="left:1003.5px;top:173px;font-size:11.5px;letter-spacing:-0.45px;color:#605e5c">Search</div>
<svg style="left:983px;top:203px" width="8" height="5" viewBox="0 0 8 5"><path d="M0.5 0.5L4 4.3 7.5 0.5" fill="none" stroke="#555" stroke-width="1"/></svg>
<svg style="left:993px;top:199px" width="17" height="16" viewBox="0 0 17 16"><rect x="0.5" y="0.5" width="10" height="9" fill="#fff" stroke="#555" stroke-width="1"/><path d="M0.5 2.5h10M0.5 5.5h10M4 0.5v9M7 0.5v9" stroke="#666" stroke-width="0.7"/><rect x="5" y="4" width="7" height="8" rx="1" fill="#ddd" stroke="#555" stroke-width="0.9"/><circle cx="12" cy="11.5" r="4.3" fill="#f2c811"/><path d="M10 11.5l1.5 1.5 2.5-2.5" fill="none" stroke="#222" stroke-width="1"/></svg>
<div class="t" style="left:1010px;top:201px;font-size:10.5px;letter-spacing:-0.3px;color:#3b3a39">#Measure</div>
<div class="a" style="left:1007px;top:220.5px;width:10.5px;height:10px;border-radius:2px;border:1px solid #bebcba;background:#f8f8f8"></div>
<svg style="left:1023.5px;top:218.5px" width="10" height="14" viewBox="0 0 10 14"><rect x="0.7" y="0.7" width="8.6" height="12.6" rx="1" fill="#fff" stroke="#484644" stroke-width="1.4"/><rect x="2" y="2" width="6" height="2.5" fill="#888"/><g fill="#999"><rect x="2" y="6" width="1.5" height="1.3"/><rect x="4.3" y="6" width="1.5" height="1.3"/><rect x="6.5" y="6" width="1.5" height="1.3"/><rect x="2" y="8.3" width="1.5" height="1.3"/><rect x="4.3" y="8.3" width="1.5" height="1.3"/><rect x="6.5" y="8.3" width="1.5" height="1.3"/><rect x="2" y="10.6" width="1.5" height="1.3"/><rect x="4.3" y="10.6" width="1.5" height="1.3"/><rect x="6.5" y="10.6" width="1.5" height="1.3"/></g></svg>
<div class="t" style="left:1038.5px;top:220.5px;font-size:10.5px;letter-spacing:-0.35px;color:#3b3a39">%Sales</div>
<div class="a" style="left:1007px;top:240.0px;width:10.5px;height:10px;border-radius:2px;border:1px solid #bebcba;background:#f8f8f8"></div>
<svg style="left:1023.5px;top:238.0px" width="10" height="14" viewBox="0 0 10 14"><rect x="0.7" y="0.7" width="8.6" height="12.6" rx="1" fill="#fff" stroke="#484644" stroke-width="1.4"/><rect x="2" y="2" width="6" height="2.5" fill="#888"/><g fill="#999"><rect x="2" y="6" width="1.5" height="1.3"/><rect x="4.3" y="6" width="1.5" height="1.3"/><rect x="6.5" y="6" width="1.5" height="1.3"/><rect x="2" y="8.3" width="1.5" height="1.3"/><rect x="4.3" y="8.3" width="1.5" height="1.3"/><rect x="6.5" y="8.3" width="1.5" height="1.3"/><rect x="2" y="10.6" width="1.5" height="1.3"/><rect x="4.3" y="10.6" width="1.5" height="1.3"/><rect x="6.5" y="10.6" width="1.5" height="1.3"/></g></svg>
<div class="t" style="left:1038.5px;top:240.0px;font-size:10.5px;letter-spacing:-0.35px;color:#3b3a39">dim_Date</div>
<div class="a" style="left:1007px;top:259.5px;width:10.5px;height:10px;border-radius:2px;border:1px solid #bebcba;background:#f8f8f8"></div>
<svg style="left:1023.5px;top:257.5px" width="10" height="14" viewBox="0 0 10 14"><rect x="0.7" y="0.7" width="8.6" height="12.6" rx="1" fill="#fff" stroke="#484644" stroke-width="1.4"/><rect x="2" y="2" width="6" height="2.5" fill="#888"/><g fill="#999"><rect x="2" y="6" width="1.5" height="1.3"/><rect x="4.3" y="6" width="1.5" height="1.3"/><rect x="6.5" y="6" width="1.5" height="1.3"/><rect x="2" y="8.3" width="1.5" height="1.3"/><rect x="4.3" y="8.3" width="1.5" height="1.3"/><rect x="6.5" y="8.3" width="1.5" height="1.3"/><rect x="2" y="10.6" width="1.5" height="1.3"/><rect x="4.3" y="10.6" width="1.5" height="1.3"/><rect x="6.5" y="10.6" width="1.5" height="1.3"/></g></svg>
<div class="t" style="left:1038.5px;top:259.5px;font-size:10.5px;letter-spacing:-0.35px;color:#3b3a39">Executed</div>
<div class="a" style="left:1007px;top:279.0px;width:10.5px;height:10px;border-radius:2px;border:1px solid #bebcba;background:#f8f8f8"></div>
<svg style="left:1023.5px;top:277.0px" width="10" height="14" viewBox="0 0 10 14"><rect x="0.7" y="0.7" width="8.6" height="12.6" rx="1" fill="#fff" stroke="#484644" stroke-width="1.4"/><rect x="2" y="2" width="6" height="2.5" fill="#888"/><g fill="#999"><rect x="2" y="6" width="1.5" height="1.3"/><rect x="4.3" y="6" width="1.5" height="1.3"/><rect x="6.5" y="6" width="1.5" height="1.3"/><rect x="2" y="8.3" width="1.5" height="1.3"/><rect x="4.3" y="8.3" width="1.5" height="1.3"/><rect x="6.5" y="8.3" width="1.5" height="1.3"/><rect x="2" y="10.6" width="1.5" height="1.3"/><rect x="4.3" y="10.6" width="1.5" height="1.3"/><rect x="6.5" y="10.6" width="1.5" height="1.3"/></g></svg>
<div class="t" style="left:1038.5px;top:279.0px;font-size:10.5px;letter-spacing:-0.35px;color:#3b3a39">Previous One Month</div>
<div class="a" style="left:1007px;top:298.5px;width:10.5px;height:10px;border-radius:2px;border:1px solid #bebcba;background:#f8f8f8"></div>
<svg style="left:1023.5px;top:296.5px" width="10" height="14" viewBox="0 0 10 14"><rect x="0.7" y="0.7" width="8.6" height="12.6" rx="1" fill="#fff" stroke="#484644" stroke-width="1.4"/><rect x="2" y="2" width="6" height="2.5" fill="#888"/><g fill="#999"><rect x="2" y="6" width="1.5" height="1.3"/><rect x="4.3" y="6" width="1.5" height="1.3"/><rect x="6.5" y="6" width="1.5" height="1.3"/><rect x="2" y="8.3" width="1.5" height="1.3"/><rect x="4.3" y="8.3" width="1.5" height="1.3"/><rect x="6.5" y="8.3" width="1.5" height="1.3"/><rect x="2" y="10.6" width="1.5" height="1.3"/><rect x="4.3" y="10.6" width="1.5" height="1.3"/><rect x="6.5" y="10.6" width="1.5" height="1.3"/></g></svg>
<div class="t" style="left:1038.5px;top:298.5px;font-size:10.5px;letter-spacing:-0.35px;color:#3b3a39">Previous Six Month</div>
<div class="a" style="left:1007px;top:318.0px;width:10.5px;height:10px;border-radius:2px;border:1px solid #bebcba;background:#f8f8f8"></div>
<svg style="left:1023.5px;top:316.0px" width="10" height="14" viewBox="0 0 10 14"><rect x="0.7" y="0.7" width="8.6" height="12.6" rx="1" fill="#fff" stroke="#484644" stroke-width="1.4"/><rect x="2" y="2" width="6" height="2.5" fill="#888"/><g fill="#999"><rect x="2" y="6" width="1.5" height="1.3"/><rect x="4.3" y="6" width="1.5" height="1.3"/><rect x="6.5" y="6" width="1.5" height="1.3"/><rect x="2" y="8.3" width="1.5" height="1.3"/><rect x="4.3" y="8.3" width="1.5" height="1.3"/><rect x="6.5" y="8.3" width="1.5" height="1.3"/><rect x="2" y="10.6" width="1.5" height="1.3"/><rect x="4.3" y="10.6" width="1.5" height="1.3"/><rect x="6.5" y="10.6" width="1.5" height="1.3"/></g></svg>
<div class="t" style="left:1038.5px;top:318.0px;font-size:10.5px;letter-spacing:-0.35px;color:#3b3a39">Previous Three Month</div>
<div class="a" style="left:1007px;top:337.5px;width:10px;height:10px;border-radius:2px;background:#f2c811"></div>
<svg style="left:1008px;top:338.5px" width="8" height="8" viewBox="0 0 8 8"><path d="M1 4l2 2 4-4.5" fill="none" stroke="#333" stroke-width="1"/></svg>
<svg style="left:1023.5px;top:335.5px" width="10" height="14" viewBox="0 0 10 14"><rect x="0.7" y="0.7" width="8.6" height="12.6" rx="1" fill="#fff" stroke="#484644" stroke-width="1.4"/><rect x="2" y="2" width="6" height="2.5" fill="#888"/><g fill="#999"><rect x="2" y="6" width="1.5" height="1.3"/><rect x="4.3" y="6" width="1.5" height="1.3"/><rect x="6.5" y="6" width="1.5" height="1.3"/><rect x="2" y="8.3" width="1.5" height="1.3"/><rect x="4.3" y="8.3" width="1.5" height="1.3"/><rect x="6.5" y="8.3" width="1.5" height="1.3"/><rect x="2" y="10.6" width="1.5" height="1.3"/><rect x="4.3" y="10.6" width="1.5" height="1.3"/><rect x="6.5" y="10.6" width="1.5" height="1.3"/></g></svg>
<div class="t" style="left:1038.5px;top:337.5px;font-size:10.5px;letter-spacing:-0.35px;color:#3b3a39">Sales Last Month</div>
<div class="a" style="left:1007px;top:357.0px;width:10.5px;height:10px;border-radius:2px;border:1px solid #bebcba;background:#f8f8f8"></div>
<svg style="left:1023.5px;top:355.0px" width="10" height="14" viewBox="0 0 10 14"><rect x="0.7" y="0.7" width="8.6" height="12.6" rx="1" fill="#fff" stroke="#484644" stroke-width="1.4"/><rect x="2" y="2" width="6" height="2.5" fill="#888"/><g fill="#999"><rect x="2" y="6" width="1.5" height="1.3"/><rect x="4.3" y="6" width="1.5" height="1.3"/><rect x="6.5" y="6" width="1.5" height="1.3"/><rect x="2" y="8.3" width="1.5" height="1.3"/><rect x="4.3" y="8.3" width="1.5" height="1.3"/><rect x="6.5" y="8.3" width="1.5" height="1.3"/><rect x="2" y="10.6" width="1.5" height="1.3"/><rect x="4.3" y="10.6" width="1.5" height="1.3"/><rect x="6.5" y="10.6" width="1.5" height="1.3"/></g></svg>
<div class="t" style="left:1038.5px;top:357.0px;font-size:10.5px;letter-spacing:-0.35px;color:#3b3a39">Title Bar</div>
<div class="a" style="left:1007px;top:376.5px;width:10.5px;height:10px;border-radius:2px;border:1px solid #bebcba;background:#f8f8f8"></div>
<svg style="left:1023.5px;top:374.5px" width="10" height="14" viewBox="0 0 10 14"><rect x="0.7" y="0.7" width="8.6" height="12.6" rx="1" fill="#fff" stroke="#484644" stroke-width="1.4"/><rect x="2" y="2" width="6" height="2.5" fill="#888"/><g fill="#999"><rect x="2" y="6" width="1.5" height="1.3"/><rect x="4.3" y="6" width="1.5" height="1.3"/><rect x="6.5" y="6" width="1.5" height="1.3"/><rect x="2" y="8.3" width="1.5" height="1.3"/><rect x="4.3" y="8.3" width="1.5" height="1.3"/><rect x="6.5" y="8.3" width="1.5" height="1.3"/><rect x="2" y="10.6" width="1.5" height="1.3"/><rect x="4.3" y="10.6" width="1.5" height="1.3"/><rect x="6.5" y="10.6" width="1.5" height="1.3"/></g></svg>
<div class="t" style="left:1038.5px;top:376.5px;font-size:10.5px;letter-spacing:-0.35px;color:#3b3a39">Total di SalesAmount per C...</div>
<div class="a" style="left:1007px;top:396.0px;width:10.5px;height:10px;border-radius:2px;border:1px solid #bebcba;background:#f8f8f8"></div>
<svg style="left:1023.5px;top:394.0px" width="10" height="14" viewBox="0 0 10 14"><rect x="0.7" y="0.7" width="8.6" height="12.6" rx="1" fill="#fff" stroke="#484644" stroke-width="1.4"/><rect x="2" y="2" width="6" height="2.5" fill="#888"/><g fill="#999"><rect x="2" y="6" width="1.5" height="1.3"/><rect x="4.3" y="6" width="1.5" height="1.3"/><rect x="6.5" y="6" width="1.5" height="1.3"/><rect x="2" y="8.3" width="1.5" height="1.3"/><rect x="4.3" y="8.3" width="1.5" height="1.3"/><rect x="6.5" y="8.3" width="1.5" height="1.3"/><rect x="2" y="10.6" width="1.5" height="1.3"/><rect x="4.3" y="10.6" width="1.5" height="1.3"/><rect x="6.5" y="10.6" width="1.5" height="1.3"/></g></svg>
<div class="t" style="left:1038.5px;top:396.0px;font-size:10.5px;letter-spacing:-0.35px;color:#3b3a39">Total Sales Amount</div>
<div class="a" style="left:1007px;top:415.5px;width:10.5px;height:10px;border-radius:2px;border:1px solid #bebcba;background:#f8f8f8"></div>
<svg style="left:1023.5px;top:413.5px" width="10" height="14" viewBox="0 0 10 14"><rect x="0.7" y="0.7" width="8.6" height="12.6" rx="1" fill="#fff" stroke="#484644" stroke-width="1.4"/><rect x="2" y="2" width="6" height="2.5" fill="#888"/><g fill="#999"><rect x="2" y="6" width="1.5" height="1.3"/><rect x="4.3" y="6" width="1.5" height="1.3"/><rect x="6.5" y="6" width="1.5" height="1.3"/><rect x="2" y="8.3" width="1.5" height="1.3"/><rect x="4.3" y="8.3" width="1.5" height="1.3"/><rect x="6.5" y="8.3" width="1.5" height="1.3"/><rect x="2" y="10.6" width="1.5" height="1.3"/><rect x="4.3" y="10.6" width="1.5" height="1.3"/><rect x="6.5" y="10.6" width="1.5" height="1.3"/></g></svg>
<div class="t" style="left:1038.5px;top:415.5px;font-size:10.5px;letter-spacing:-0.35px;color:#3b3a39">Total Sales Amount ALL</div>
<div class="a" style="left:1007px;top:435.0px;width:10.5px;height:10px;border-radius:2px;border:1px solid #bebcba;background:#f8f8f8"></div>
<svg style="left:1023.5px;top:433.0px" width="10" height="14" viewBox="0 0 10 14"><rect x="0.7" y="0.7" width="8.6" height="12.6" rx="1" fill="#fff" stroke="#484644" stroke-width="1.4"/><rect x="2" y="2" width="6" height="2.5" fill="#888"/><g fill="#999"><rect x="2" y="6" width="1.5" height="1.3"/><rect x="4.3" y="6" width="1.5" height="1.3"/><rect x="6.5" y="6" width="1.5" height="1.3"/><rect x="2" y="8.3" width="1.5" height="1.3"/><rect x="4.3" y="8.3" width="1.5" height="1.3"/><rect x="6.5" y="8.3" width="1.5" height="1.3"/><rect x="2" y="10.6" width="1.5" height="1.3"/><rect x="4.3" y="10.6" width="1.5" height="1.3"/><rect x="6.5" y="10.6" width="1.5" height="1.3"/></g></svg>
<div class="t" style="left:1038.5px;top:435.0px;font-size:10.5px;letter-spacing:-0.35px;color:#3b3a39">TotalSalesAmountV2</div>
<div class="a" style="left:1007px;top:454.5px;width:10.5px;height:10px;border-radius:2px;border:1px solid #bebcba;background:#f8f8f8"></div>
<svg style="left:1024px;top:453.5px" width="9" height="12" viewBox="0 0 9 12"><path d="M8.5 1.2V0.6H0.8L5 6 0.8 11.4h7.7v-.6" fill="none" stroke="#555" stroke-width="1"/></svg>
<div class="t" style="left:1038.5px;top:454.5px;font-size:10.5px;letter-spacing:-0.35px;color:#3b3a39">Value</div>
<svg style="left:1141px;top:240px" width="10" height="9" viewBox="0 0 10 9"><path d="M5 0.6L9.4 8.4H0.6z" fill="none" stroke="#d9653b" stroke-width="1"/><path d="M5 3v3M5 6.8v.8" stroke="#d9653b" stroke-width="0.9"/></svg>
<svg style="left:985px;top:475.4px" width="5" height="8" viewBox="0 0 5 8"><path d="M0.5 0.5L4.3 4 0.5 7.5" fill="none" stroke="#555" stroke-width="1"/></svg>
<svg style="left:994px;top:474.4px" width="12" height="11" viewBox="0 0 12 11"><rect x="0.7" y="0.7" width="10.6" height="9.6" fill="#fff" stroke="#3b3a39" stroke-width="1.4"/><path d="M0.6 2.8h10.8" stroke="#3b3a39" stroke-width="1.8"/><path d="M0.6 5.5h10.8M0.6 8h10.8M4.2 2v8.5M7.8 2v8.5" stroke="#444" stroke-width="1.1"/></svg>
<div class="t" style="left:1010px;top:474.4px;font-size:10.5px;letter-spacing:-0.45px;color:#3b3a39">dim_Currency</div>
<svg style="left:985px;top:494.8px" width="5" height="8" viewBox="0 0 5 8"><path d="M0.5 0.5L4.3 4 0.5 7.5" fill="none" stroke="#555" stroke-width="1"/></svg>
<svg style="left:994px;top:493.8px" width="12" height="11" viewBox="0 0 12 11"><rect x="0.7" y="0.7" width="10.6" height="9.6" fill="#fff" stroke="#3b3a39" stroke-width="1.4"/><path d="M0.6 2.8h10.8" stroke="#3b3a39" stroke-width="1.8"/><path d="M0.6 5.5h10.8M0.6 8h10.8M4.2 2v8.5M7.8 2v8.5" stroke="#444" stroke-width="1.1"/></svg>
<div class="t" style="left:1010px;top:493.8px;font-size:10.5px;letter-spacing:-0.45px;color:#3b3a39">dim_Customer</div>
<svg style="left:985px;top:514.3px" width="5" height="8" viewBox="0 0 5 8"><path d="M0.5 0.5L4.3 4 0.5 7.5" fill="none" stroke="#555" stroke-width="1"/></svg>
<svg style="left:994px;top:512.3px" width="13" height="13" viewBox="0 0 13 13"><rect x="0.5" y="0.5" width="9" height="8" fill="#fff" stroke="#555" stroke-width="1"/><path d="M0.5 2.5h9M0.5 5h9M3.5 0.5v8M6.5 0.5v8" stroke="#666" stroke-width="0.7"/><rect x="5" y="4.5" width="7.5" height="8" rx="1" fill="#ccc" stroke="#555" stroke-width="0.9"/><circle cx="8.7" cy="8" r="1.5" fill="none" stroke="#666" stroke-width="0.7"/></svg>
<div class="t" style="left:1010px;top:513.3px;font-size:10.5px;letter-spacing:-0.45px;color:#3b3a39">dim_Date</div>
<svg style="left:985px;top:533.8px" width="5" height="8" viewBox="0 0 5 8"><path d="M0.5 0.5L4.3 4 0.5 7.5" fill="none" stroke="#555" stroke-width="1"/></svg>
<svg style="left:994px;top:532.8px" width="12" height="11" viewBox="0 0 12 11"><rect x="0.7" y="0.7" width="10.6" height="9.6" fill="#fff" stroke="#3b3a39" stroke-width="1.4"/><path d="M0.6 2.8h10.8" stroke="#3b3a39" stroke-width="1.8"/><path d="M0.6 5.5h10.8M0.6 8h10.8M4.2 2v8.5M7.8 2v8.5" stroke="#444" stroke-width="1.1"/></svg>
<div class="t" style="left:1010px;top:532.8px;font-size:10.5px;letter-spacing:-0.45px;color:#3b3a39">dim_Product</div>
<svg style="left:985px;top:553.2px" width="5" height="8" viewBox="0 0 5 8"><path d="M0.5 0.5L4.3 4 0.5 7.5" fill="none" stroke="#555" stroke-width="1"/></svg>
<svg style="left:994px;top:552.2px" width="12" height="11" viewBox="0 0 12 11"><rect x="0.7" y="0.7" width="10.6" height="9.6" fill="#fff" stroke="#3b3a39" stroke-width="1.4"/><path d="M0.6 2.8h10.8" stroke="#3b3a39" stroke-width="1.8"/><path d="M0.6 5.5h10.8M0.6 8h10.8M4.2 2v8.5M7.8 2v8.5" stroke="#444" stroke-width="1.1"/></svg>
<div class="t" style="left:1010px;top:552.2px;font-size:10.5px;letter-spacing:-0.45px;color:#3b3a39">dim_SalesTeritory</div>
<svg style="left:985px;top:572.6px" width="5" height="8" viewBox="0 0 5 8"><path d="M0.5 0.5L4.3 4 0.5 7.5" fill="none" stroke="#555" stroke-width="1"/></svg>
<svg style="left:994px;top:571.6px" width="12" height="11" viewBox="0 0 12 11"><rect x="0.7" y="0.7" width="10.6" height="9.6" fill="#fff" stroke="#3b3a39" stroke-width="1.4"/><path d="M0.6 2.8h10.8" stroke="#3b3a39" stroke-width="1.8"/><path d="M0.6 5.5h10.8M0.6 8h10.8M4.2 2v8.5M7.8 2v8.5" stroke="#444" stroke-width="1.1"/></svg>
<div class="t" style="left:1010px;top:571.6px;font-size:10.5px;letter-spacing:-0.45px;color:#3b3a39">fact_InternetSales</div>

<div class="a" style="left:0;top:130px;width:1170px;height:1px;background:#dedcda"></div>
<div class="a" style="left:34px;top:131px;width:1136px;height:2px;background:linear-gradient(rgba(225,223,221,0.8),rgba(225,223,221,0))"></div>
</body></html>
